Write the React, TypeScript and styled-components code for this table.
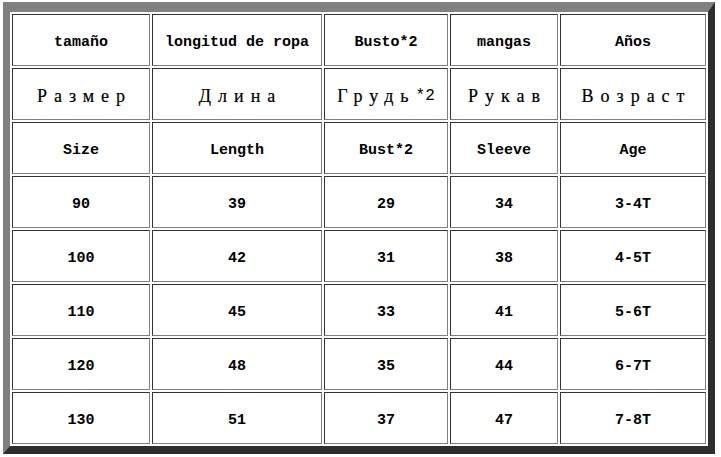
import React from "react";
import styled, { createGlobalStyle } from "styled-components";

const Global = createGlobalStyle`
  html, body { margin: 0; padding: 0; background: #fff; }
  body { padding: 2px 0 0 3px; }
`;

const Frame = styled.div`
  display: inline-grid;
  grid-template-columns: 138px 170px 124px 108px 146px;
  grid-auto-rows: 52px;
  gap: 2px;
  padding: 2px;
  border-style: solid;
  border-width: 10px 7px 8px 7px;
  border-color: #808080 #2e2e2e #2e2e2e #808080;
  background: #fff;
`;

const Cell = styled.div<{ $light?: boolean }>`
  box-sizing: border-box;
  border: 1px solid;
  border-color: #333 #808080 #808080 #333;
  display: flex;
  align-items: center;
  justify-content: center;
  padding-top: 4px;
  font-family: "Liberation Mono", "DejaVu Sans Mono", monospace;
  font-size: 15px;
  font-weight: ${(p) => (p.$light ? "normal" : "bold")};
  color: #000;
  white-space: nowrap;
`;

const Wide = styled.span<{ $trail?: boolean }>`
  font-family: "Liberation Serif", "DejaVu Serif", serif;
  letter-spacing: 7px;
  margin-right: ${(p) => (p.$trail ? "0" : "-7px")};
  font-size: 18px;
  -webkit-text-stroke: 0.2px #000;
`;

const Suffix = styled.span`
  font-size: 16px;
`;

const rows: React.ReactNode[][] = [
  ["tamaño", "longitud de ropa", "Busto*2", "mangas", "Años"],
  [
    <Wide>Размер</Wide>,
    <Wide>Длина</Wide>,
    <>
      <Wide $trail>Грудь</Wide>
      <Suffix>*2</Suffix>
    </>,
    <Wide>Рукав</Wide>,
    <Wide>Возраст</Wide>,
  ],
  ["Size", "Length", "Bust*2", "Sleeve", "Age"],
  ["90", "39", "29", "34", "3-4T"],
  ["100", "42", "31", "38", "4-5T"],
  ["110", "45", "33", "41", "5-6T"],
  ["120", "48", "35", "44", "6-7T"],
  ["130", "51", "37", "47", "7-8T"],
];

export default function App() {
  return (
    <>
      <Global />
      <Frame>
        {rows.map((r, i) =>
          r.map((c, j) => (
            <Cell key={`${i}-${j}`} $light={i === 1}>
              {c}
            </Cell>
          ))
        )}
      </Frame>
    </>
  );
}
